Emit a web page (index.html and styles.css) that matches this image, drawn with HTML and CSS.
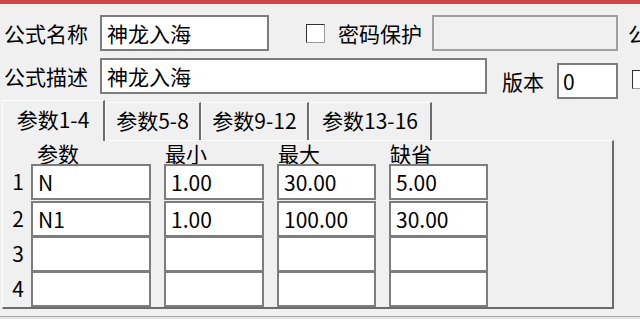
FILE: index.html
```html
<!DOCTYPE html>
<html lang="zh-CN">
<head>
    <meta charset="UTF-8">
    <title>公式编辑</title>
    <link rel="stylesheet" href="styles.css">
</head>
<body>
    <div class="topbar"></div>

    <div class="form-row row-name">
        <span class="label">公式名称</span>
        <input class="field field-name" type="text" value="神龙入海">
        <input class="chk chk-pwd" type="checkbox">
        <span class="label-pwd">密码保护</span>
        <input class="field field-pwd" type="text" disabled>
        <span class="label-cut">公</span>
    </div>

    <div class="form-row row-desc">
        <span class="label">公式描述</span>
        <input class="field field-desc" type="text" value="神龙入海">
        <span class="label-ver">版本</span>
        <input class="field field-ver" type="text" value="0">
        <input class="chk chk-ver" type="checkbox">
    </div>

    <div class="tabs">
        <div class="tab active">参数1-4</div>
        <div class="tab">参数5-8</div>
        <div class="tab">参数9-12</div>
        <div class="tab">参数13-16</div>
    </div>

    <div class="panel">
        <div class="params">
            <span></span>
            <span class="head first">参数</span>
            <span class="head">最小</span>
            <span class="head">最大</span>
            <span class="head">缺省</span>

            <span class="num">1</span>
            <input class="cell" type="text" value="N">
            <input class="cell" type="text" value="1.00">
            <input class="cell" type="text" value="30.00">
            <input class="cell" type="text" value="5.00">

            <span class="num">2</span>
            <input class="cell" type="text" value="N1">
            <input class="cell" type="text" value="1.00">
            <input class="cell" type="text" value="100.00">
            <input class="cell" type="text" value="30.00">

            <span class="num">3</span>
            <input class="cell" type="text" value="">
            <input class="cell" type="text" value="">
            <input class="cell" type="text" value="">
            <input class="cell" type="text" value="">

            <span class="num">4</span>
            <input class="cell" type="text" value="">
            <input class="cell" type="text" value="">
            <input class="cell" type="text" value="">
            <input class="cell" type="text" value="">
        </div>
    </div>

    <div class="bottom-line"></div>
</body>
</html>
```

FILE: styles.css
```css
body {
    margin: 0;
    width: 640px;
    height: 319px;
    overflow: hidden;
    background-color: #f0f0f0;
    font-family: "Noto Sans CJK SC", "Noto Sans", sans-serif;
    font-size: 21px;
    color: #000;
}
.topbar {
    height: 4px;
    background-color: #cf434a;
}
.form-row {
    display: flex;
    padding-left: 4px;
    white-space: nowrap;
}
.form-row > * {
    flex-shrink: 0;
}
.row-name {
    margin-top: 11px;
    align-items: center;
    height: 36px;
}
.row-desc {
    margin-top: 7px;
    align-items: flex-start;
}
.label {
    width: 96px;
    line-height: 36px;
}
.field {
    box-sizing: border-box;
    height: 36px;
    margin: 0;
    padding: 0 5px;
    border: 2px solid #7d7d7d;
    background-color: #fff;
    font-family: inherit;
    font-size: 21px;
    color: #000;
    outline: none;
}
.field-name {
    width: 169px;
}
.field-pwd {
    width: 186px;
    background-color: #f0f0f0;
    border-color: #a0a0a0;
}
.field-desc {
    width: 387px;
}
.field-ver {
    width: 61px;
    margin-top: 5px;
    padding: 0 4px;
}
.chk {
    appearance: none;
    box-sizing: border-box;
    width: 19px;
    height: 19px;
    margin: 0;
    border: 1px solid #333;
    border-right-color: #9a9a9a;
    border-bottom-color: #9a9a9a;
    background-color: #fff;
}
.chk-pwd {
    margin-left: 37px;
}
.label-pwd {
    width: 94px;
    margin-left: 13px;
}
.label-cut {
    margin-left: 10px;
}
.label-ver {
    width: 55px;
    margin-left: 15px;
    margin-top: 5px;
    line-height: 36px;
}
.chk-ver {
    margin-left: 14px;
    margin-top: 12px;
}

/* tabs */
.tabs {
    display: flex;
    align-items: flex-end;
    height: 40px;
    margin-top: 1px;
    padding-left: 2px;
}
.tab {
    box-sizing: border-box;
    height: 38px;
    line-height: 35px;
    text-align: center;
    border-top: 1px solid #fff;
    border-left: 1px solid #fff;
    border-right: 2px solid #6c6c6c;
    white-space: nowrap;
}
.tab:nth-child(1) { width: 103px; }
.tab:nth-child(2) { width: 96px; }
.tab:nth-child(3) { width: 108px; }
.tab:nth-child(4) { width: 123px; }
.tab.active {
    position: relative;
    z-index: 1;
    height: 41px;
    margin-bottom: -1px;
    line-height: 36px;
    background-color: #f0f0f0;
}

.panel {
    box-sizing: border-box;
    width: 612px;
    height: 169px;
    margin-left: 2px;
    padding: 2px 0 0 1px;
    border-top: 1px solid #fff;
    border-left: 1px solid #fff;
    border-right: 2px solid #6c6c6c;
    border-bottom: 2px solid #6c6c6c;
}
.params {
    display: grid;
    grid-template-columns: 14px 120px 100px 99px 99px;
    grid-template-rows: 21px 37px 35px 35px 35px;
    column-gap: 13px;
}
.head {
    line-height: 21px;
    padding-left: 1px;
    white-space: nowrap;
}
.head.first {
    padding-left: 6px;
}
.num {
    line-height: 35px;
    text-align: right;
    margin-right: -6px;
}
.cell {
    box-sizing: border-box;
    width: 100%;
    height: 36px;
    margin: 0;
    padding: 0 5px;
    border: 2px solid #7d7d7d;
    background-color: #fff;
    font-family: inherit;
    font-size: 21px;
    color: #000;
    outline: none;
}
.bottom-line {
    margin-top: 7px;
    height: 3px;
    border-top: 1px solid #a8a8a8;
    background-color: #e4e4e4;
}
```
